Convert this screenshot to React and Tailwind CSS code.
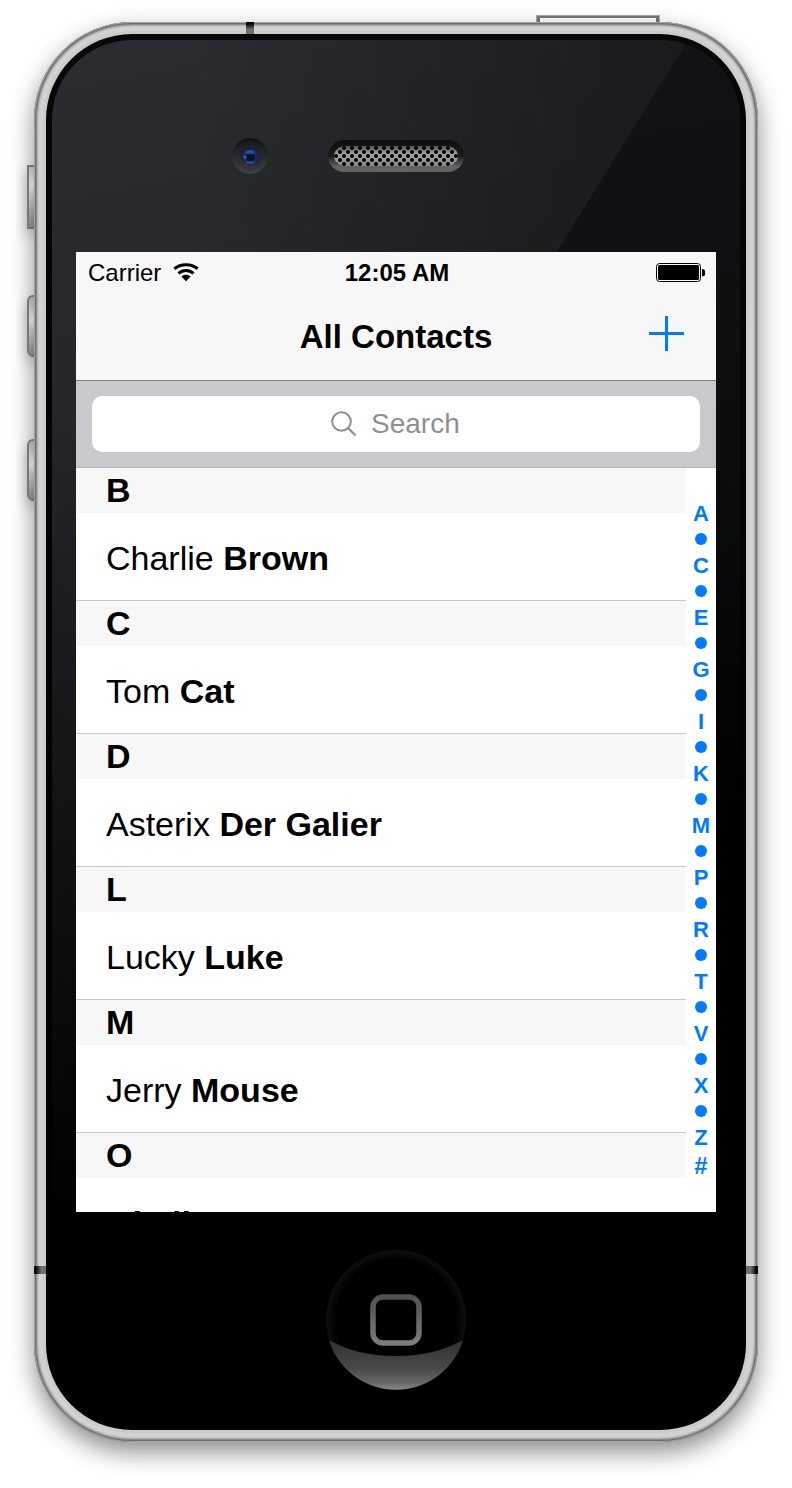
import React from "react";

const contacts = [
  { letter: "B", first: "Charlie", last: "Brown" },
  { letter: "C", first: "Tom", last: "Cat" },
  { letter: "D", first: "Asterix", last: "Der Galier" },
  { letter: "L", first: "Lucky", last: "Luke" },
  { letter: "M", first: "Jerry", last: "Mouse" },
  { letter: "O", first: "", last: "Obelix" },
];

const index = ["A", "", "C", "", "E", "", "G", "", "I", "", "K", "", "M", "", "P", "", "R", "", "T", "", "V", "", "X", "", "Z"];

function WifiIcon() {
  return (
    <svg viewBox="0 0 26 20" className="h-5 w-[26px]" fill="none" stroke="#000" aria-hidden="true">
      <path d="M1.4 5.8C7.8 .4 18.2 .4 24.6 5.8" strokeWidth="3.2" />
      <path d="M5.4 10.4C9.8 6.4 16.2 6.4 20.6 10.4" strokeWidth="3" />
      <path d="M8.4 13.6C11 11.2 15 11.2 17.600 13.6L13 18.200Z" fill="#000" stroke="none" />
    </svg>
  );
}

function BatteryIcon() {
  return (
    <svg viewBox="0 0 50 20" className="h-5 w-[50px]" role="img" aria-label="Battery full">
      <rect x=".5" y=".5" width="44" height="18" rx="3" fill="none" stroke="#000" />
      <rect x="2" y="2" width="41" height="15" rx="1.5" fill="#000" />
      <path d="M46 6.2h1a2 2 0 0 1 2 2v3a2 2 0 0 1-2 2h-1z" fill="#000" />
    </svg>
  );
}

function BezelFinish() {
  return (
    <svg className="absolute inset-0 h-full w-full" viewBox="0 0 688 1384" preserveAspectRatio="none" aria-hidden="true">
      <defs>
        <linearGradient id="gloss" gradientUnits="userSpaceOnUse" x1="100" y1="0" x2="330" y2="1130">
          <stop offset="0" stopColor="#2b2c31" />
          <stop offset=".3" stopColor="#25262a" />
          <stop offset=".6" stopColor="#141517" />
          <stop offset="1" stopColor="#000" />
        </linearGradient>
        <linearGradient id="dim" x1="0" x2="1" y1="0" y2="0">
          <stop offset=".2" stopColor="#000" stopOpacity="0" />
          <stop offset="1" stopColor="#000" stopOpacity=".4" />
        </linearGradient>
        <linearGradient id="shade" gradientUnits="userSpaceOnUse" x1="560" y1="0" x2="688" y2="800">
          <stop offset="0" stopColor="#121316" />
          <stop offset=".5" stopColor="#0c0d0f" />
          <stop offset="1" stopColor="#000" />
        </linearGradient>
      </defs>
      <rect width="688" height="1384" fill="url(#gloss)" />
      <rect width="688" height="1384" fill="url(#dim)" />
      <path d="M636 0H688V1384H24V988Z" fill="url(#shade)" />
    </svg>
  );
}

function Camera() {
  return (
    <svg viewBox="0 0 36 36" className="h-9 w-9" aria-hidden="true">
      <defs>
        <linearGradient id="cam" x2="0" y2="1">
          <stop stopColor="#101011" />
          <stop offset="1" stopColor="#414244" />
        </linearGradient>
        <radialGradient id="lens">
          <stop stopColor="#06101c" />
          <stop offset=".5" stopColor="#0a1c3c" />
          <stop offset=".8" stopColor="#143684" />
          <stop offset="1" stopColor="#16224c" />
        </radialGradient>
        <linearGradient id="barrel" x2="0" y2="1">
          <stop stopColor="#1c1c1e" />
          <stop offset="1" stopColor="#363638" />
        </linearGradient>
      </defs>
      <circle cx="18" cy="18" r="18" fill="url(#cam)" />
      <circle cx="18" cy="18" r="15" fill="url(#barrel)" opacity=".7" />
      <circle cx="19" cy="17" r="10.5" fill="#202138" opacity=".6" />
      <circle cx="18" cy="19" r="7.4" fill="url(#lens)" />
      <ellipse cx="18" cy="14" rx="4.5" ry="2" fill="#1e58ba" opacity=".8" />
      <ellipse cx="18" cy="24.500" rx="4.5" ry="1.8" fill="#27489e" opacity=".8" />
      <circle cx="13" cy="19" r="1.8" fill="#295ad0" />
      <rect x="15" y="16" width="8" height="7" rx="2" fill="#071426" />
    </svg>
  );
}

function Speaker() {
  return (
    <svg viewBox="0 0 136 32" className="h-8 w-[136px]" aria-hidden="true">
      <defs>
        <linearGradient id="slot" x2="0" y2="1">
          <stop stopColor="#0d0d0e" />
          <stop offset=".5" stopColor="#1b1b1c" />
          <stop offset=".85" stopColor="#666" />
          <stop offset="1" stopColor="#626262" />
        </linearGradient>
        <linearGradient id="mesh" x2="0" y2="1">
          <stop stopColor="#555" />
          <stop offset=".4" stopColor="#a4a4a4" />
          <stop offset="1" stopColor="#8a8a8a" />
        </linearGradient>
        <pattern id="holes" width="8" height="8" patternUnits="userSpaceOnUse" x="6" y="6">
          <circle cx="2" cy="2" r="2" />
          <circle cx="6" cy="6" r="2" />
        </pattern>
      </defs>
      <rect width="136" height="32" rx="16" fill="url(#slot)" />
      <rect x="6" y="6" width="124" height="20" rx="10" fill="url(#mesh)" />
      <rect x="6" y="6" width="124" height="20" rx="10" fill="url(#holes)" />
    </svg>
  );
}

function HomeGlyph() {
  return (
    <svg viewBox="0 0 140 140" className="h-full w-full" aria-hidden="true">
      <defs>
        <radialGradient id="rim">
          <stop offset=".87" stopColor="#000" />
          <stop offset="1" stopColor="#0f0f0f" />
        </radialGradient>
        <linearGradient id="shine" gradientUnits="userSpaceOnUse" x1="0" y1="90" x2="0" y2="140">
          <stop stopColor="#303030" />
          <stop offset=".55" stopColor="#484848" />
          <stop offset=".85" stopColor="#666" />
          <stop offset="1" stopColor="#8a8a8a" />
        </linearGradient>
        <linearGradient id="square" x2="0" y2="1">
          <stop stopColor="#505050" />
          <stop offset="1" stopColor="#7c7c7c" />
        </linearGradient>
      </defs>
      <circle cx="70" cy="70" r="70" fill="url(#rim)" />
      <path d="M3 90Q31 106 70 106T137 90A70 70 0 0 1 3 90Z" fill="url(#shine)" />
      <rect x="47" y="47" width="46" height="46" rx="10" fill="none" stroke="url(#square)" strokeWidth="5.500" />
    </svg>
  );
}

function StatusBar() {
  return (
    <div className="grid h-10 grid-cols-[1fr_auto_1fr] items-center pt-0.5 pr-2.5 pl-3 text-2xl">
      <div className="flex items-center gap-3">
        <span>Carrier</span>
        <WifiIcon />
      </div>
      <time className="text-center font-bold">12:05 AM</time>
      <div className="flex justify-end">
        <BatteryIcon />
      </div>
    </div>
  );
}

function ContactList() {
  return (
    <div className="flex min-h-0 flex-1">
      <div className="min-w-0 flex-1 overflow-hidden">
        {contacts.map((c) => (
          <section key={c.letter} className="border-b border-[#c8c7cc]">
            <h2 className="flex h-[45px] items-center bg-[#f7f7f7] pl-[30px] text-[34px] font-bold">{c.letter}</h2>
            <p className="flex h-[87px] items-center pt-1 pl-[30px] text-[34px]">
              <span>
                {c.first} <b>{c.last}</b>
              </span>
            </p>
          </section>
        ))}
      </div>
      <nav aria-label="Index" className="flex w-[30px] flex-col items-center pt-8 text-[22px] font-bold text-[#007aff]">
        {index.map((l, i) =>
          l ? (
            <a key={i} href={"#" + l} className="flex h-[26px] items-center">
              {l}
            </a>
          ) : (
            <span key={i} className="flex h-[26px] items-center">
              <span className="size-3 rounded-full bg-[#007aff]" />
            </span>
          )
        )}
        <a href="#other" className="flex h-8 items-center text-2xl">
          #
        </a>
      </nav>
    </div>
  );
}

function Screen() {
  return (
    <main className="relative flex aspect-[2/3] w-full flex-col overflow-hidden bg-white text-black">
      <header className="border-b border-[#808080] bg-[#f7f7f7]">
        <StatusBar />
        <div className="grid h-[88px] grid-cols-[1fr_auto_1fr] items-center px-[31px]">
          <h1 className="col-start-2 pt-0.5 text-[33px] font-bold">All Contacts</h1>
          <button type="button" aria-label="Add contact" className="mt-5 flex h-11 w-9 items-center justify-center self-start justify-self-end">
            <svg viewBox="0 0 36 36" className="size-9" stroke="#007aff" strokeWidth="3" aria-hidden="true">
              <path d="M17.500 0V35M0 17.500H35" />
            </svg>
          </button>
        </div>
      </header>
      <div className="border-b border-[#b4b3b8] bg-[#c9c8ce] px-4 pt-[15px] pb-[15px]">
        <label className="flex h-14 items-center justify-center gap-[14px] rounded-[10px] bg-white">
          <svg viewBox="0 0 26 26" className="size-[26px]" fill="none" stroke="#8e8e93" strokeWidth="2" aria-hidden="true">
            <circle cx="10.500" cy="10.500" r="9.300" />
            <path d="M17 17L24.500 24.500" strokeWidth="2.400" />
          </svg>
          <input
            type="text"
            aria-label="Search"
            placeholder="Search"
            className="w-[90px] bg-transparent text-[28px] outline-none placeholder:text-[#8e8e93] placeholder:opacity-100"
          />
        </label>
      </div>
      <ContactList />
    </main>
  );
}

export default function App() {
  return (
    <div className="min-h-screen bg-white px-[34px] pt-[22px] pb-[46px] font-['Liberation_Sans',Arial,sans-serif]">
      <div className="relative mx-auto max-w-[724px]">
        <div className="absolute -top-[7px] right-[98px] h-3 w-[124px] border-[3px] border-x-4 border-[#777] bg-white outline-1 -outline-offset-1 outline-[#aaa]" />
        <div className="absolute top-[143px] -left-[7px] h-16 w-3 border-2 border-[#8c8c8c] bg-linear-to-b from-[#ddd] via-[#fff] via-30% to-[#999] shadow-[0_6px_14px_rgba(0,0,0,0.25)]" />
        <div className="absolute top-[273px] -left-[7px] h-[62px] w-3 rounded-l-md border-2 border-[#8c8c8c] bg-linear-to-b from-[#ccc] via-[#fff] via-40% to-[#999] shadow-[0_6px_14px_rgba(0,0,0,0.25)]" />
        <div className="absolute top-[417px] -left-[7px] h-[62px] w-3 rounded-l-md border-2 border-[#8c8c8c] bg-linear-to-b from-[#ccc] via-[#fff] via-40% to-[#999] shadow-[0_6px_14px_rgba(0,0,0,0.25)]" />

        <div className="relative rounded-[98px] bg-[#cbcbcb] p-3 shadow-[inset_0_0_0_1px_#a4a4a4,inset_0_0_0_2px_#6e6e6e,inset_0_0_0_3px_#8c8c8c,inset_0_0_0_4px_#b4b4b4,inset_0_0_0_5px_#c6c6c6,inset_0_0_0_9px_#d2d2d2,0_10px_24px_rgba(0,0,0,0.45)]">
          <div className="absolute top-0 left-[212px] h-3 w-2 bg-linear-to-b from-black to-[#707070] to-60%" />
          <div className="absolute bottom-[168px] left-0 h-2 w-3 bg-linear-to-r from-black to-[#707070] to-60%" />
          <div className="absolute right-0 bottom-[168px] h-2 w-3 bg-linear-to-l from-black to-[#707070] to-60%" />

          <div className="rounded-[86px] bg-linear-to-b from-[#070808] to-black p-[6px]">
            <div className="relative overflow-hidden rounded-[80px] px-6">
              <BezelFinish />
              <div className="relative flex h-[212px] items-center justify-center gap-[60px] pt-5">
                <Camera />
                <Speaker />
                <div className="w-9" />
              </div>
              <Screen />
              <div className="relative flex h-[212px] items-center justify-center pt-1">
                <button type="button" aria-label="Home" className="size-[140px] rounded-full">
                  <HomeGlyph />
                </button>
              </div>
            </div>
          </div>
        </div>
      </div>
    </div>
  );
}
